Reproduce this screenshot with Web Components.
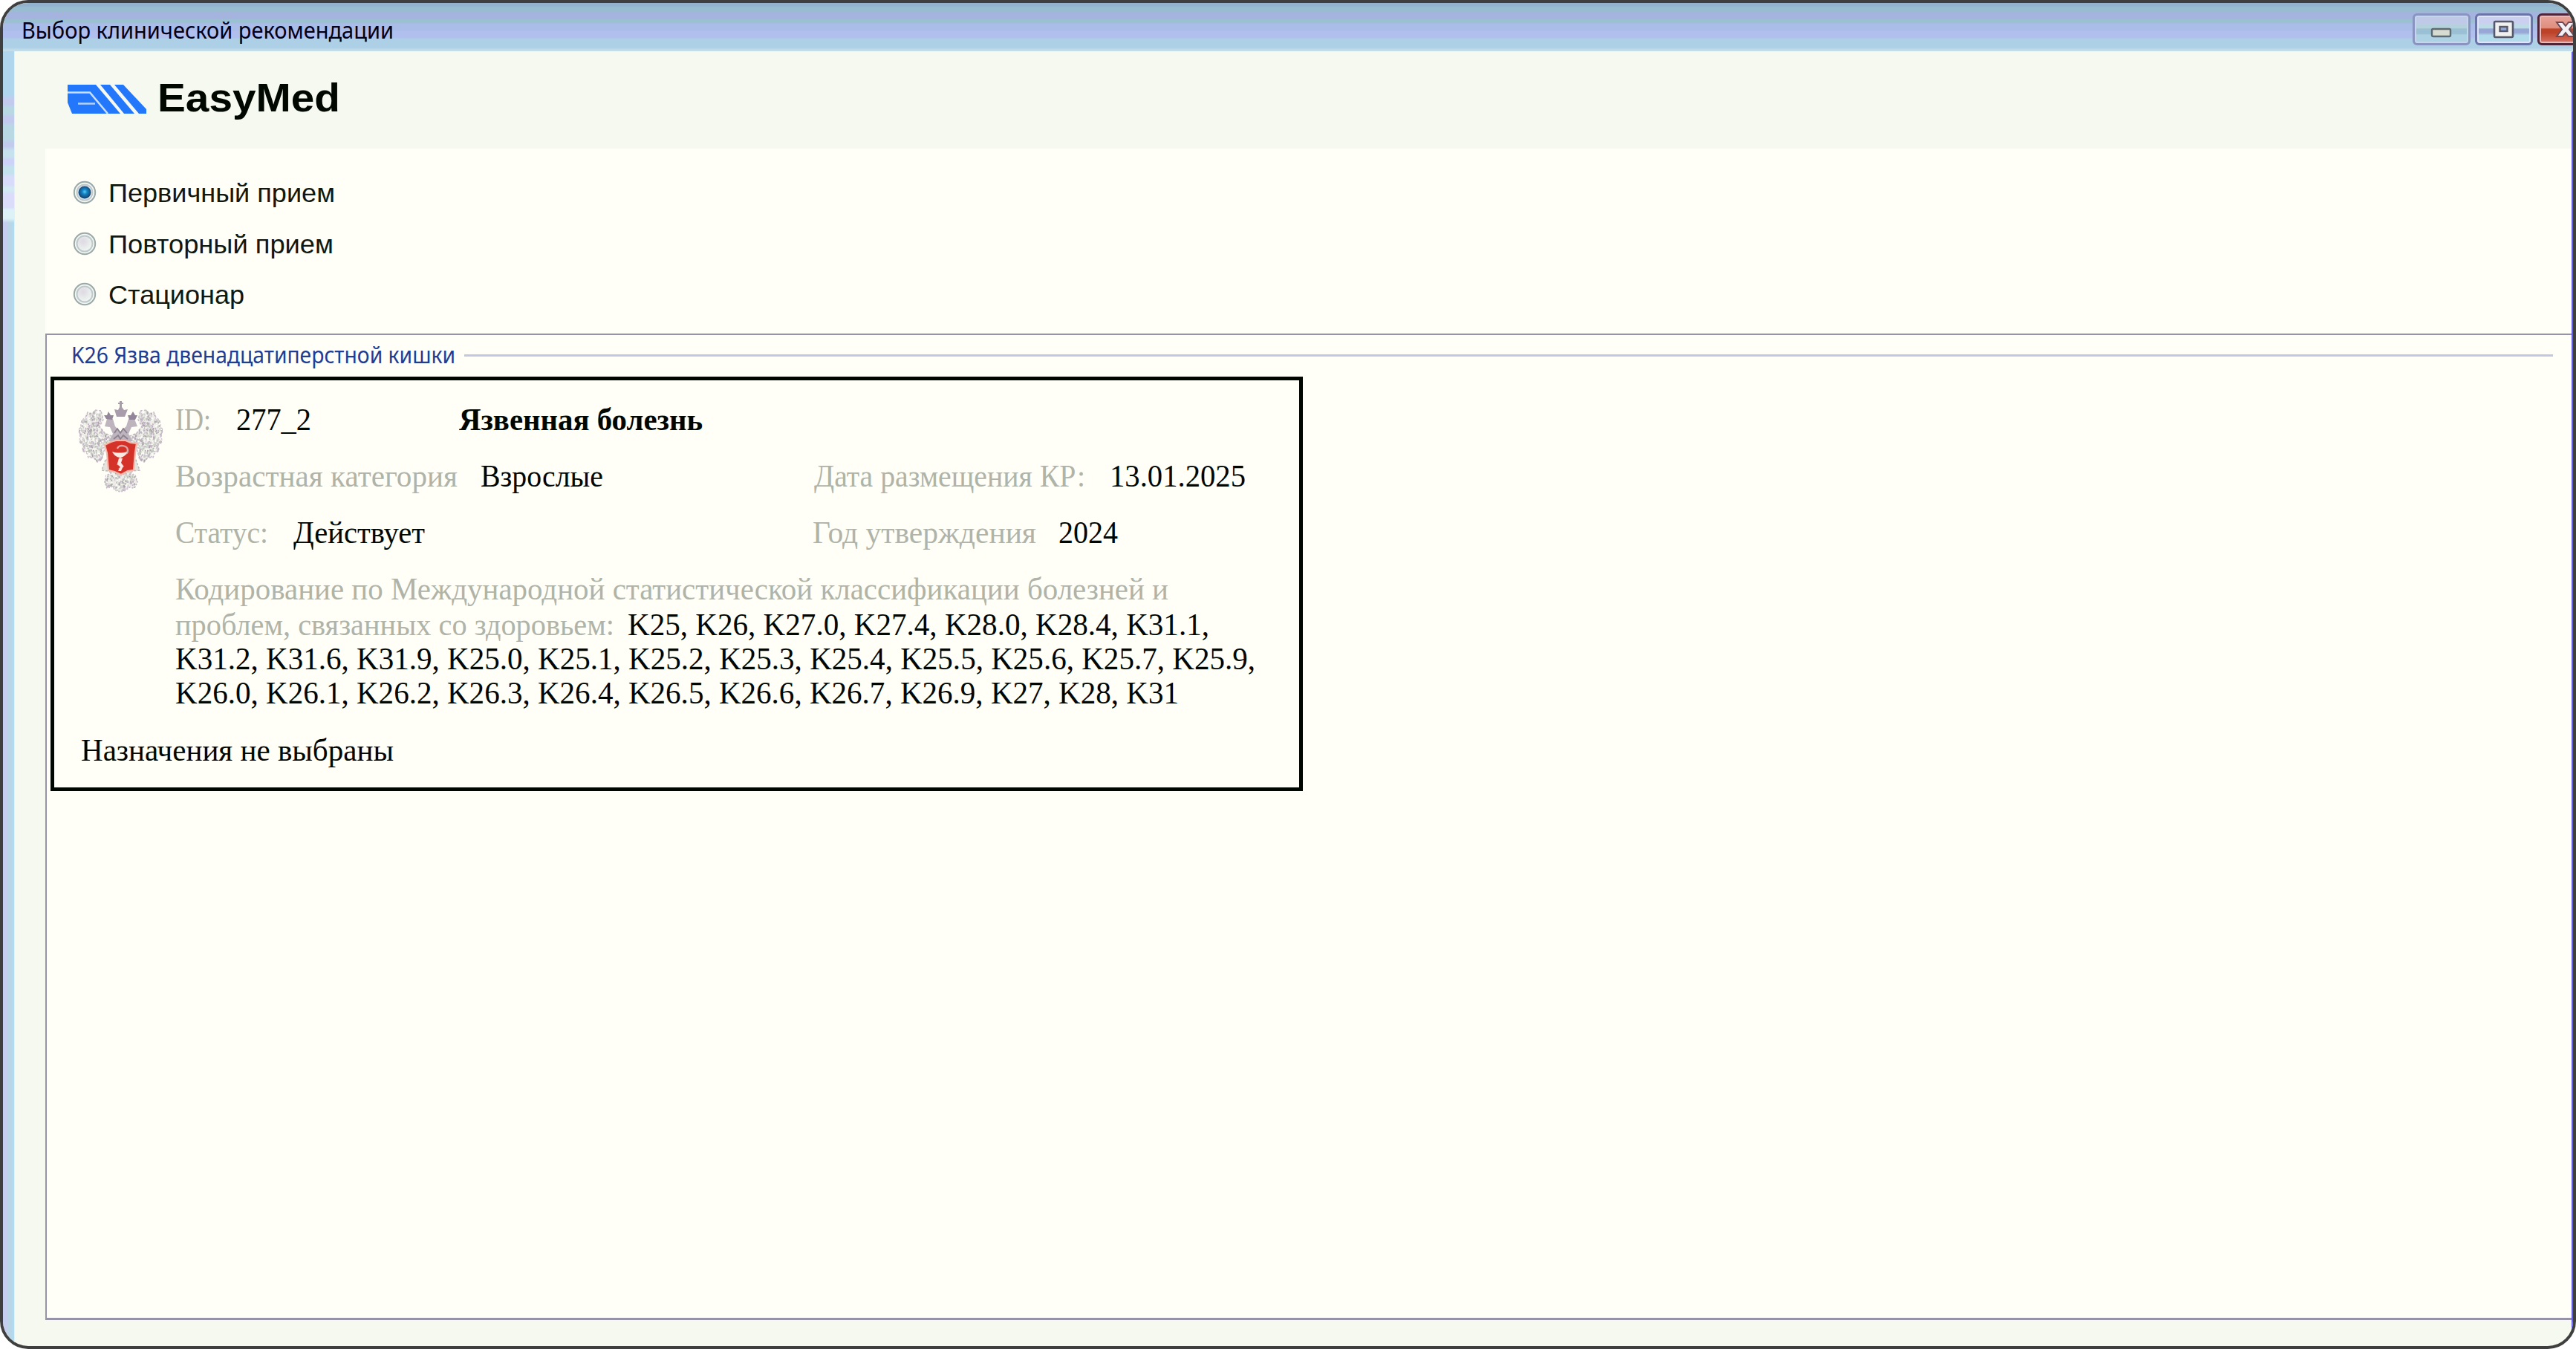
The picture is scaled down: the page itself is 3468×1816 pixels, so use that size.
<!DOCTYPE html>
<html lang="ru">
<head>
<meta charset="utf-8">
<title>Выбор клинической рекомендации</title>
<style>
html,body{margin:0;padding:0;background:#fff;width:3468px;height:1816px;overflow:hidden}
</style>
</head>
<body>
<app-window>
  <fit-text slot="title" w="501">Выбор клинической рекомендации</fit-text>
  <brand-header></brand-header>
  <visit-options>
    <visit-radio checked><fit-text w="305">Первичный прием</fit-text></visit-radio>
    <visit-radio><fit-text w="303">Повторный прием</fit-text></visit-radio>
    <visit-radio><fit-text w="183">Стационар</fit-text></visit-radio>
  </visit-options>
  <diagnosis-group>
    <fit-text slot="legend" w="517">K26 Язва двенадцатиперстной кишки</fit-text>
    <recommendation-card></recommendation-card>
  </diagnosis-group>
</app-window>
<script>
const attach = (el, html) => { const r = el.attachShadow({mode:'open'}); r.innerHTML = html; return r; };

/* Single line of text stretched or condensed to the width given in "w" */
class FitText extends HTMLElement {
  connectedCallback() {
    if (this.shadowRoot) return;
    const r = attach(this, `<style>:host{display:block;flex:none;white-space:pre}
      span{display:inline-block;transform-origin:0 50%}</style><span><slot></slot></span>`);
    const s = r.querySelector('span'), w = +this.getAttribute('w');
    this.style.width = w + 'px';
    const n = s.getBoundingClientRect().width;
    if (n) s.style.transform = `scaleX(${w / n})`;
  }
}

class CaptionButton extends HTMLElement {
  connectedCallback() {
    const k = this.getAttribute('kind');
    const glyph = {
      min: `<svg width="30" height="24"><rect x="2" y="11" width="25" height="10" rx="1.5" fill="#d6dcd0" stroke="#5f6a70" stroke-width="2.4"/></svg>`,
      max: `<svg width="30" height="26"><rect x="2" y="2" width="25" height="21" rx="1.5" fill="#f0f0ee" stroke="#56586c" stroke-width="2.6"/><rect x="9.500" y="9" width="10" height="6" fill="#8fa8d4" stroke="#56586c" stroke-width="2.4"/></svg>`,
      close: `<svg width="32" height="26"><path d="M3 3h8l4 5 4-5h8l-7 9.500 7 9.500h-8l-4-5-4 5H3l7-9.500z" fill="#f2f0f2" stroke="#6b4a58" stroke-width="2"/></svg>`
    }[k];
    attach(this, `<style>
      :host{display:flex;align-items:center;justify-content:center;box-sizing:border-box;flex:none;width:78px;height:43px;border:3px solid #8a94c0;border-radius:6px;
        background:linear-gradient(#c1c9e8 0 28%,#b4d2dc 34% 46%,#9bc0d4 48% 66%,#acd2e4 70%);box-shadow:inset 0 0 0 2px #c5d6ec}
      :host([kind=max]){border-color:#6a74a6;background:linear-gradient(#ccd0f0 0 28%,#bcdce6 34% 46%,#98a8d6 48% 62%,#b2dcec 72%);box-shadow:inset 0 0 0 2px #dfe6fa}
      :host([kind=close]){border-color:#4e2438;background:linear-gradient(#e8a49c,#e08c7c 46%,#bc4328 48% 62%,#d87468);box-shadow:inset 0 0 0 2px #f0b8b0}
      svg{display:block}</style>${glyph}`);
  }
}

class AppWindow extends HTMLElement {
  connectedCallback() {
    attach(this, `<style>
      :host{display:flex;flex-direction:column;box-sizing:border-box;width:3468px;height:1816px;border:4px solid #3f3f3f;border-radius:38px;overflow:hidden;background:#f6f9f0}
      .bar{display:flex;align-items:flex-start;flex:none;height:65px;padding-left:25px;
        background:linear-gradient(#92b2ce 0 4px,#98bdd0 6px 11px,#a4b4de 13px 21px,#9ac0d2 22px 26px,#aabce8 28px 36px,#b0bfee 38px 46px,#aed0e6 49px 60px,#c2dcea 63px)}
      .title{padding-top:5px;font:31px/62px "Noto Sans",sans-serif;color:#000018}
      .btns{display:flex;gap:6px;margin-left:auto;padding-top:14px;width:216px}
      .body{display:flex;flex:1;min-height:0}
      .edge{flex:none;width:16px;border-right:1px solid #dff2f6;box-sizing:border-box;
        background:
         linear-gradient(#b0d6ee 0 58px,#c2cbee 64px 72px,#b8d8e4 76px 84px,#c2cbee 88px 96px,#b8d8e4 100px 118px,#c2cbee 124px 128px,#c6e2ee 134px 142px,#cdd2f8 146px 152px,#c3e2ee 156px 165px,#d8dcfa 169px 180px,#d3eaf2 184px 188px,#dadcfa 192px 210px,#dcf2f6 214px 225px,transparent 231px),
         linear-gradient(90deg,#c5cdf0 0 5px,#b9d6e6 7px 11px,#b0daf0 13px)}
      .client{display:flex;flex-direction:column;flex:1;min-width:0;border-top:1px solid #f0faf8;border-right:2px solid #5c58f0}
    </style>
    <div class="bar"><div class="title"><slot name="title"></slot></div>
      <div class="btns"><caption-button kind="min"></caption-button><caption-button kind="max"></caption-button><caption-button kind="close"></caption-button></div></div>
    <div class="body"><div class="edge"></div><div class="client"><slot></slot></div></div>`);
  }
}

class BrandHeader extends HTMLElement {
  connectedCallback() {
    attach(this, `<style>
      :host{display:flex;flex:none;box-sizing:border-box;height:130px;padding:32px 0 0 71px;font:bold 53px/60px "Liberation Sans",sans-serif;color:#000800}
      svg{flex:none;display:block;margin:10px 14px 0 0}</style>
      <svg width="107" height="42" viewBox="0 0 107 42"><g fill="#2377fb">
        <path d="M0 2H38L71 41H6L0 26Z"/><path d="M44 2H57L90 41H76Z"/><path d="M63 2H75L106 35V41H96Z"/></g>
        <path d="M0 12.500H30L54 41" fill="none" stroke="#c9dffb" stroke-width="2.600"/>
        <path d="M14 27.500H37" fill="none" stroke="#b4d2fa" stroke-width="2.600"/></svg>
      <fit-text w="246">EasyMed</fit-text>`);
  }
}

class VisitOptions extends HTMLElement {
  connectedCallback() {
    attach(this, `<style>:host{display:block;flex:none;box-sizing:border-box;height:249px;margin-left:41px;padding:26px 0 0 37px;background:#fffff8}</style><slot></slot>`);
  }
}

class VisitRadio extends HTMLElement {
  connectedCallback() {
    const on = this.hasAttribute('checked');
    attach(this, `<style>
      :host{display:flex;align-items:center;height:68.4px;font:35px/68px "Liberation Sans",sans-serif;color:#101810}
      svg{flex:none;display:block;margin:0 16px 2px 0}</style>
      <svg width="32" height="32" viewBox="0 0 32 32"><defs><radialGradient id="g" cx=".4" cy=".35" r=".7"><stop offset="0" stop-color="#ded8e2"/><stop offset="1" stop-color="#f0faf4"/></radialGradient>
      <radialGradient id="b" cx=".5" cy=".45" r=".55"><stop offset="0" stop-color="#58d0f8"/><stop offset=".35" stop-color="#1684c4"/><stop offset="1" stop-color="#123c68"/></radialGradient></defs>
      <circle cx="16" cy="16" r="14.200" fill="#f2f8f4" stroke="#9aa8a8" stroke-width="2"/><circle cx="16" cy="16" r="10.500" fill="url(#g)" stroke="#c0c8cc" stroke-width="2"/>
      ${on ? '<circle cx="16" cy="16" r="8.500" fill="url(#b)"/>' : ''}</svg><slot></slot>`);
  }
}

class DiagnosisGroup extends HTMLElement {
  connectedCallback() {
    attach(this, `<style>
      :host{display:flex;flex-direction:column;align-items:flex-start;flex:1;min-height:0;box-sizing:border-box;margin:0 0 35px 41px;border:solid #96919f;border-color:#9792a8;border-width:2.500px 0 3px 2px;background:#fffff8}
      .legend{display:flex;align-items:center;align-self:stretch;flex:none;height:52px;padding:0 25px 0 33px;font:31px/52px "Noto Sans",sans-serif;color:#203c94;gap:12px}
      i{flex:1;height:3px;background:#c2c8e2;margin-top:2px}</style>
      <div class="legend"><slot name="legend"></slot><i></i></div><slot></slot>`);
  }
}

class HealthEmblem extends HTMLElement {
  connectedCallback() {
    /* Speckled plumage: fixed-seed dots kept inside the wing and tail contours */
    let seed = 7; const rnd = () => (seed = (seed * 16807) % 2147483647) / 2147483647;
    const cols = ['#c4b0c8', '#b9bfb4', '#d6ccd8', '#cdd4c8', '#a9a2a8', '#fffdf8'];
    const speckle = (n, x0, y0, w, h) => {
      let d = '';
      for (let i = 0; i < n; i++) {
        const x = (rnd() * w + x0).toFixed(1), y = (rnd() * h + y0).toFixed(1);
        d += `<path d="M${x} ${y}l${(rnd() * 3 - 1.5).toFixed(1)} ${(rnd() * 3 + .6).toFixed(1)}" stroke="${cols[i % 6]}"/>`;
      }
      return d;
    };
    const wing = 'M39 22L31 21L27 26L21 24L18 31L13 35L12 42L9 48L11 56L10 64L15 68L14 76L20 79L22 85L29 85L34 91L40 88L44 72L54 62L53 56L44 52L37 43L42 34Z';
    const tail = 'M57 104L46 109L44 118L47 126L54 124L58 129L65 131L72 129L77 125L84 126L88 118L85 109L75 104Z';
    attach(this, `<style>:host{display:block;flex:none}svg{display:block}</style>
      <svg width="130" height="140" viewBox="0 0 130 140"><defs><clipPath id="w"><path d="${wing}"/></clipPath><clipPath id="t"><path d="${tail}"/></clipPath>
      <g id="wing"><path d="${wing}" fill="#eeefe8" stroke="#cbbacd" stroke-width="1.500" stroke-dasharray="3 2"/>
      <g clip-path="url(#w)" fill="none" stroke-width="1.700">${speckle(800, 8, 18, 46, 74)}</g></g></defs>
      <use href="#wing"/><use href="#wing" transform="matrix(-1 0 0 1 131 0)"/>
      <path d="M45 88L40 102L48 103L54 106H78L82 103L91 102L86 88Z" fill="#e4e5dc" stroke="#bfb9bf" stroke-width="1.500" stroke-dasharray="3 2"/>
      <path d="${tail}" fill="#eceee6" stroke="#cbb9cc" stroke-width="1.800" stroke-dasharray="2 2"/>
      <g clip-path="url(#t)" fill="none" stroke-width="1.700">${speckle(260, 43, 103, 46, 28)}</g>
      <path d="M44 43L47 33L55 33L58 43L65 50L73 43L76 33L84 33L88 43L80 44L76 53L82 63H49L55 53L51 44Z" fill="#bdb4be"/>
      <path d="M59 38L65 33L72 38L70 45L65 49L61 45Z" fill="#fffff8"/>
      <path d="M46 33L43 28L47 28L49 23L52 28L56 28L54 34ZM77 34L75 28L79 28L82 23L85 28L88 28L85 34Z" fill="#94869a"/>
      <path d="M60 30L57 20L62 21L64 17V13H62V11H64V9H67V11H69V13H67V17L70 21L75 20L71 30Z" fill="#a99cab"/>
      <path d="M57 52l4-6 4 6 4-6 5 6M56 60l6-5 3 5 4-5 6 5" fill="none" stroke="#8b808e" stroke-width="1.800"/>
      <path d="M52 64L59 62H72L79 65L87 66L85 78L83 102L75 103L66 108L57 104L49 102L47 79L44 68Z" fill="#d43228" stroke="#f8b8ac" stroke-width="2.200"/>
      <path d="M61 73C62 67 75 68 75 75C75 79 72 80 70 80M65 85V90L62 94L68 97L63 101" fill="none" stroke="#d8aaa8" stroke-width="2.500"/>
      <path d="M54 77C60 79 68 79 74 77C73 82 69 84 66 85H64C59 84 56 81 54 77ZM63 86H68L66 92L69 96L66 103H62L65 98L61 93Z" fill="#fae9e2"/></svg>`);
  }
}

class RecommendationCard extends HTMLElement {
  connectedCallback() {
    attach(this, `<style>
      :host{display:flex;flex-direction:column;box-sizing:border-box;width:1686px;height:558px;margin:4px 0 0 5px;border:5px solid #000600;padding:15px 0 0;background:#fffff8;font:42px/76px "Liberation Serif",serif;color:#000600}
      .top{display:flex}health-emblem{margin:4px 9px 0 24px}
      .row{display:flex;height:76px}.mute{color:#b0b4a8}
      .codes{padding-top:14px}.codes .row{height:45.500px;line-height:46px}.codes .a{height:48px;line-height:48px}.codes .b{height:47px;line-height:48px}
      .note{display:flex;padding:32px 0 0 36px;line-height:46px}</style>
      <div class="top"><health-emblem></health-emblem><div>
      <div class="row"><fit-text class="mute" w="48">ID:</fit-text><fit-text style="margin-left:34px" w="101">277_2</fit-text><fit-text style="margin-left:199px;font-weight:bold" w="328">Язвенная болезнь</fit-text></div>
      <div class="row"><fit-text class="mute" w="380">Возрастная категория</fit-text><fit-text style="margin-left:31px" w="165">Взрослые</fit-text><fit-text class="mute" style="margin-left:284px" w="365">Дата размещения КР:</fit-text><fit-text style="margin-left:33px" w="183">13.01.2025</fit-text></div>
      <div class="row"><fit-text class="mute" w="125">Статус:</fit-text><fit-text style="margin-left:34px" w="177">Действует</fit-text><fit-text class="mute" style="margin-left:522px" w="301">Год утверждения</fit-text><fit-text style="margin-left:30px" w="80">2024</fit-text></div>
      <div class="codes">
      <div class="row a"><fit-text class="mute" w="1337">Кодирование по Международной статистической классификации болезней и</fit-text></div>
      <div class="row b"><fit-text class="mute" w="591">проблем, связанных со здоровьем:</fit-text><fit-text style="margin-left:18px" w="783">K25, K26, K27.0, K27.4, K28.0, K28.4, K31.1,</fit-text></div>
      <div class="row"><fit-text w="1454">K31.2, K31.6, K31.9, K25.0, K25.1, K25.2, K25.3, K25.4, K25.5, K25.6, K25.7, K25.9,</fit-text></div>
      <div class="row"><fit-text w="1351">K26.0, K26.1, K26.2, K26.3, K26.4, K26.5, K26.6, K26.7, K26.9, K27, K28, K31</fit-text></div>
      </div></div></div>
      <div class="note"><fit-text w="421">Назначения не выбраны</fit-text></div>`);
  }
}

customElements.define('caption-button', CaptionButton);
customElements.define('app-window', AppWindow);
customElements.define('brand-header', BrandHeader);
customElements.define('visit-options', VisitOptions);
customElements.define('visit-radio', VisitRadio);
customElements.define('diagnosis-group', DiagnosisGroup);
customElements.define('health-emblem', HealthEmblem);
customElements.define('recommendation-card', RecommendationCard);
customElements.define('fit-text', FitText);
</script>
</body>
</html>
